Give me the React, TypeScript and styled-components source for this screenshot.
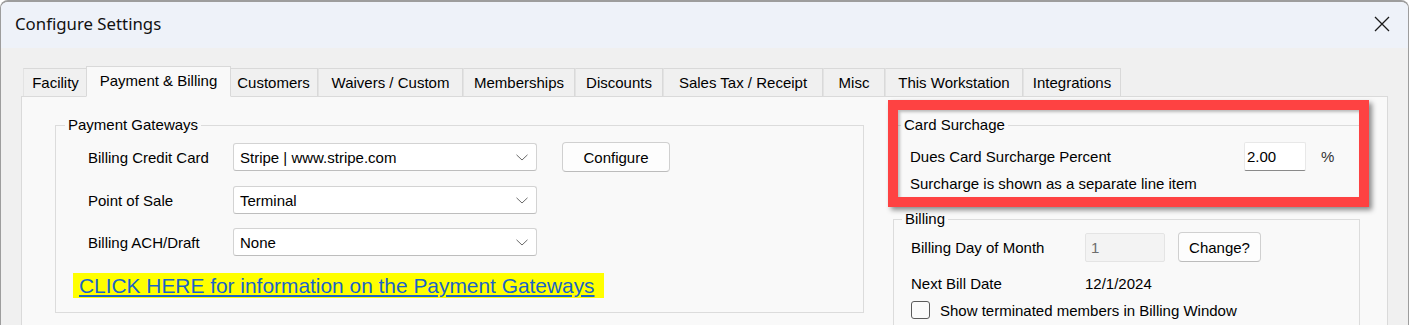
import React from 'react';
import styled, { createGlobalStyle } from 'styled-components';

//Global
const GlobalStyle = createGlobalStyle`
    html, body {
        margin: 0;
        padding: 0;
        background: #ffffff;
    }
    * { box-sizing: border-box; }
`;

const UI_FONT = `"Liberation Sans", Arial, sans-serif`;

//Window chrome
const Window = styled.div`
    width: 1409px;
    height: 325px;
    border: 1px solid #9d9d9d;
    border-top-width: 2px;
    border-bottom: none;
    border-radius: 8px 8px 0 0;
    overflow: hidden;
    display: flex;
    flex-direction: column;
    font-family: ${UI_FONT};
    color: #000;
`;

const TitleBar = styled.div`
    height: 46px;
    flex: 0 0 46px;
    background: #eef2f9;
    display: flex;
    align-items: center;
    justify-content: space-between;
    padding: 0 14px 3px 14px;
`;

const Title = styled.span`
    font-family: "Noto Sans", "Open Sans", sans-serif;
    font-size: 16.8px;
    color: #111;
`;

const CloseButton = styled.button`
    width: 24px;
    height: 24px;
    border: none;
    background: transparent;
    padding: 0;
    display: flex;
    align-items: center;
    justify-content: center;
`;

const Body = styled.div`
    flex: 1;
    background: #f0f0f0;
    padding: 17px 0 0 20px;
`;

//Tabs
const TabStrip = styled.div`
    display: flex;
    align-items: flex-end;
    height: 31px;
    padding-left: 2px;
`;

const Tab = styled.div<{ $w: number; $active?: boolean }>`
    width: ${p => p.$w}px;
    height: ${p => (p.$active ? 31 : 28)}px;
    margin: ${p => (p.$active ? '0 -2px -1px -2px' : '0')};
    position: relative;
    z-index: ${p => (p.$active ? 2 : 1)};
    display: flex;
    align-items: center;
    justify-content: center;
    padding-bottom: ${p => (p.$active ? 3 : 1)}px;
    font-size: 15px;
    background: ${p => (p.$active ? '#f9f9f9' : '#f0f0f0')};
    border: 1px solid #d9d9d9;
    border-bottom: ${p => (p.$active ? '1px solid #f9f9f9' : 'none')};
    border-left-color: ${p => (p.$active ? '#d9d9d9' : '#e3e3e3')};
    white-space: nowrap;
`;

const TabPanel = styled.div`
    width: 1367px;
    height: 240px;
    background: #f9f9f9;
    border: 1px solid #dadada;
    display: flex;
    align-items: flex-start;
    padding: 19px 0 0 33px;
    gap: 29px;
`;

//Group boxes
const GroupBox = styled.fieldset<{ $w: number }>`
    width: ${p => p.$w}px;
    margin: 0;
    padding: 0;
    min-width: 0;
    border: 1px solid #dcdcdc;
    border-radius: 0;
`;

const GroupTitle = styled.legend<{ $inset: number }>`
    margin-left: ${p => p.$inset}px;
    padding: 0 3px;
    font-size: 15px;
    line-height: 18px;
`;

const GroupContent = styled.div<{ $pad: string }>`
    padding: ${p => p.$pad};
`;

//Payment gateways
const GatewayGrid = styled.div`
    display: grid;
    grid-template-columns: 145px 304px auto;
    row-gap: 14px;
    align-items: center;
    justify-content: start;
`;

const FieldLabel = styled.span`
    font-size: 15px;
    white-space: nowrap;
`;

const Combo = styled.div`
    height: 28px;
    background: #ffffff;
    border: 1px solid #d3d3d3;
    border-bottom-color: #bdbdbd;
    border-radius: 3px;
    display: flex;
    align-items: center;
    justify-content: space-between;
    padding: 0 8px 0 6px;
    font-size: 15px;
`;

const PushButton = styled.button<{ $w: number; $offset?: number }>`
    width: ${p => p.$w}px;
    height: 30px;
    margin-left: ${p => p.$offset ?? 0}px;
    background: #fdfdfd;
    border: 1px solid #d0d0d0;
    border-bottom-color: #bcbcbc;
    border-radius: 4px;
    font-family: ${UI_FONT};
    font-size: 15px;
    color: #000;
    padding: 0;
`;

const LinkRow = styled.div`
    margin-top: 17px;
    margin-left: -15px;
`;

const HelpLink = styled.a`
    display: inline-block;
    background: #ffff00;
    color: #1a64c8;
    text-decoration: underline;
    text-underline-offset: 2px;
    font-size: 20.9px;
    line-height: 25px;
    padding: 0 9px 0 6px;
    cursor: pointer;
`;

//Right column
const RightColumn = styled.div`
    display: flex;
    flex-direction: column;
    gap: 7px;
`;

const Highlighted = styled.div`
    position: relative;
`;

const Annotation = styled.div`
    position: absolute;
    left: -5px;
    top: -16px;
    width: 481px;
    height: 107px;
    border: 10px solid #fe4242;
    box-shadow: 3px 3px 5px rgba(0, 0, 0, 0.45), inset 2px 2px 3px rgba(0, 0, 0, 0.25);
    pointer-events: none;
`;

const FieldRow = styled.div<{ $gap?: number }>`
    display: flex;
    align-items: center;
    margin-top: ${p => p.$gap ?? 0}px;
`;

const RowLabel = styled.span<{ $w: number }>`
    width: ${p => p.$w}px;
    font-size: 15px;
    white-space: nowrap;
`;

const Value = styled.span`
    font-size: 15px;
`;

const TextBox = styled.div<{ $w: number; $disabled?: boolean }>`
    width: ${p => p.$w}px;
    height: 29px;
    display: flex;
    align-items: center;
    padding-left: ${p => (p.$disabled ? 5 : 2)}px;
    font-size: 15px;
    background: ${p => (p.$disabled ? '#f3f3f3' : '#ffffff')};
    color: ${p => (p.$disabled ? '#6d6d6d' : '#000')};
    border: 1px solid ${p => (p.$disabled ? '#e4e4e4' : '#e8e8e8')};
    border-bottom-color: ${p => (p.$disabled ? '#e4e4e4' : '#8a8a8a')};
    border-radius: 2px;
`;

const Unit = styled.span`
    margin-left: 15px;
    font-size: 15px;
    color: #333;
`;

const Note = styled.div`
    margin-top: 4px;
    font-size: 15px;
    line-height: 18px;
`;

const CheckRow = styled.label`
    display: flex;
    align-items: center;
    gap: 10px;
    margin-top: 9px;
    font-size: 15px;
`;

const CheckBox = styled.span`
    width: 19px;
    height: 18px;
    border: 1px solid #5b5b5b;
    border-radius: 3px;
    background: #fbfbfb;
`;

const Chevron = () => (
    <svg width="12" height="7" viewBox="0 0 12 7">
        <path d="M0.5 0.8 L6 6 L11.5 0.8" fill="none" stroke="#6a6a6a" strokeWidth="1" />
    </svg>
);

const tabs: { name: string; w: number }[] = [
    { name: 'Facility', w: 65 },
    { name: 'Payment & Billing', w: 145 },
    { name: 'Customers', w: 89 },
    { name: 'Waivers / Custom', w: 145 },
    { name: 'Memberships', w: 112 },
    { name: 'Discounts', w: 88 },
    { name: 'Sales Tax / Receipt', w: 160 },
    { name: 'Misc', w: 62 },
    { name: 'This Workstation', w: 138 },
    { name: 'Integrations', w: 98 },
];

const gateways = [
    { label: 'Billing Credit Card', value: 'Stripe | www.stripe.com' },
    { label: 'Point of Sale', value: 'Terminal' },
    { label: 'Billing ACH/Draft', value: 'None' },
];

export default function App() {
    return (
        <>
            <GlobalStyle />
            <Window>
                <TitleBar>
                    <Title>Configure Settings</Title>
                    <CloseButton aria-label="Close">
                        <svg width="16" height="16" viewBox="0 0 16 16">
                            <path d="M1 1 L15 15 M15 1 L1 15" stroke="#1a1a1a" strokeWidth="1.3" />
                        </svg>
                    </CloseButton>
                </TitleBar>

                <Body>
                    <TabStrip>
                        {tabs.map(t => (
                            <Tab key={t.name} $w={t.w} $active={t.name === 'Payment & Billing'}>
                                {t.name}
                            </Tab>
                        ))}
                    </TabStrip>

                    <TabPanel>
                        <GroupBox $w={809}>
                            <GroupTitle $inset={9}>Payment Gateways</GroupTitle>
                            <GroupContent $pad="8px 0 14px 32px">
                                <GatewayGrid>
                                    {gateways.map((g, i) => (
                                        <React.Fragment key={g.label}>
                                            <FieldLabel>{g.label}</FieldLabel>
                                            <Combo>
                                                <span>{g.value}</span>
                                                <Chevron />
                                            </Combo>
                                            {i === 0 ? <PushButton $w={108} $offset={25}>Configure</PushButton> : <span />}
                                        </React.Fragment>
                                    ))}
                                </GatewayGrid>
                                <LinkRow>
                                    <HelpLink>CLICK HERE for information on the Payment Gateways</HelpLink>
                                </LinkRow>
                            </GroupContent>
                        </GroupBox>

                        <RightColumn>
                            <Highlighted>
                                <GroupBox $w={467}>
                                    <GroupTitle $inset={7}>Card Surchage</GroupTitle>
                                    <GroupContent $pad="8px 0 9px 16px">
                                        <FieldRow>
                                            <RowLabel $w={334}>Dues Card Surcharge Percent</RowLabel>
                                            <TextBox $w={62}>2.00</TextBox>
                                            <Unit>%</Unit>
                                        </FieldRow>
                                        <Note>Surcharge is shown as a separate line item</Note>
                                    </GroupContent>
                                </GroupBox>
                                <Annotation />
                            </Highlighted>

                            <GroupBox $w={467}>
                                <GroupTitle $inset={8}>Billing</GroupTitle>
                                <GroupContent $pad="4px 0 10px 17px">
                                    <FieldRow>
                                        <RowLabel $w={174}>Billing Day of Month</RowLabel>
                                        <TextBox $w={80} $disabled>1</TextBox>
                                        <PushButton $w={83} $offset={13}>Change?</PushButton>
                                    </FieldRow>
                                    <FieldRow $gap={13}>
                                        <RowLabel $w={174}>Next Bill Date</RowLabel>
                                        <Value>12/1/2024</Value>
                                    </FieldRow>
                                    <CheckRow>
                                        <CheckBox />
                                        Show terminated members in Billing Window
                                    </CheckRow>
                                </GroupContent>
                            </GroupBox>
                        </RightColumn>
                    </TabPanel>
                </Body>
            </Window>
        </>
    );
}
